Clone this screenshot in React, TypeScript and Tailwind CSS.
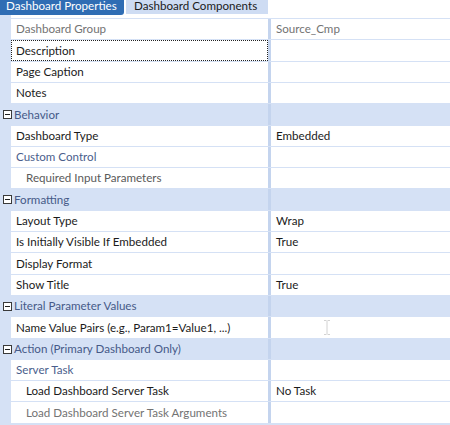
import React from 'react';

type Tone = 'normal' | 'muted' | 'sub' | 'dim';

interface GridRow {
  name: string;
  cat?: boolean;
  value?: string;
  tone?: Tone;
  indent?: boolean;
  focus?: boolean;
  tall?: boolean;
}

const rows: GridRow[] = [
  { name: 'Dashboard Group', value: 'Source_Cmp', tone: 'muted' },
  { name: 'Description', focus: true, tall: true },
  { name: 'Page Caption' },
  { name: 'Notes' },
  { name: 'Behavior', cat: true, tall: true },
  { name: 'Dashboard Type', value: 'Embedded' },
  { name: 'Custom Control', tone: 'sub' },
  { name: 'Required Input Parameters', indent: true, tone: 'dim' },
  { name: 'Formatting', cat: true, tall: true },
  { name: 'Layout Type', value: 'Wrap' },
  { name: 'Is Initially Visible If Embedded', value: 'True' },
  { name: 'Display Format', tall: true },
  { name: 'Show Title', value: 'True' },
  { name: 'Literal Parameter Values', cat: true },
  { name: 'Name Value Pairs (e.g., Param1=Value1, ...)', tall: true },
  { name: 'Action (Primary Dashboard Only)', cat: true },
  { name: 'Server Task', tone: 'sub' },
  { name: 'Load Dashboard Server Task', indent: true, value: 'No Task' },
  { name: 'Load Dashboard Server Task Arguments', indent: true, tone: 'muted', tall: true },
];

const toneClass: Record<Tone, string> = {
  normal: 'text-[#1b1b1b]',
  muted: 'text-[#737373]',
  sub: 'text-[#4a5e8c]',
  dim: 'text-[#5a5a5a]',
};

const MinusBox = () => (
  <svg width="9" height="9" viewBox="0 0 9 9" className="shrink-0">
    <rect x="0.5" y="0.5" width="8" height="8" fill="#ffffff" stroke="#3a3a3a" />
    <rect x="2" y="4" width="5" height="1" fill="#1f1f1f" />
  </svg>
);

const CategoryRow = ({ row }: { row: GridRow }) => (
  <div className={`flex ${row.tall ? 'h-[21px]' : 'h-[20px]'}`}>
    <div className="flex w-[268px] items-center whitespace-nowrap bg-[#d5e1f5] pl-[3px]">
      <MinusBox />
      <span className="ml-[2px] text-[#465a88]">{row.name}</span>
    </div>
    <div className="w-[3px] bg-[#c4d4ee]" />
    <div className="flex-1 bg-[#d5e1f5]" />
  </div>
);

const PropRow = ({ row }: { row: GridRow }) => (
  <div className={`flex ${row.tall ? 'h-[21px]' : 'h-[20px]'}`}>
    <div className="w-[11px]" />
    <div
      className={`flex w-[257px] items-center overflow-hidden whitespace-nowrap bg-white ${
        row.indent ? 'pl-[15px]' : 'pl-[5px]'
      } ${row.focus ? 'outline-1 -outline-offset-1 outline-dotted outline-[#222]' : ''} ${toneClass[row.tone ?? 'normal']}`}
    >
      {row.name}
    </div>
    <div className="w-[3px] bg-[#c4d4ee]" />
    <div
      className={`flex flex-1 items-center bg-white pl-[5px] ${
        row.tone === 'muted' ? 'text-[#737373]' : 'text-[#1b1b1b]'
      }`}
    >
      {row.value}
    </div>
  </div>
);

export default function App() {
  return (
    <div
      className="relative h-[425px] w-[450px] overflow-hidden bg-white text-[11.6px]"
      style={{ fontFamily: 'Lato, "Noto Sans", sans-serif' }}
    >
      {/* tab strip */}
      <div className="flex h-[15px] items-start whitespace-nowrap bg-white leading-[11px]">
        <div className="h-[15px] w-[124px] overflow-hidden rounded-br-[3px] bg-[#2f6db4] pl-[6px] text-white">
          Dashboard Properties
        </div>
        <div className="ml-[2px] h-[14px] w-[142px] overflow-hidden bg-[#cedcf3] pl-[8px] text-[#1b1b1b]">
          Dashboard Components
        </div>
      </div>

      {/* property grid */}
      <div className="flex flex-col gap-px bg-[#d5e1f5] pb-[2px]">
        <div className="flex h-[3px]">
          <div className="w-[11px]" />
          <div className="flex-1 bg-white" />
        </div>
        {rows.map((row) =>
          row.cat ? <CategoryRow key={row.name} row={row} /> : <PropRow key={row.name} row={row} />
        )}
      </div>

      {/* text cursor over the value column */}
      <svg
        className="pointer-events-none absolute left-[323px] top-[320px]"
        width="8"
        height="15"
        viewBox="0 0 8 15"
      >
        <path d="M1 0.5h2.5M4.5 0.5h2.5M4 1v13M1 14.5h2.5M4.5 14.5h2.5" stroke="#d2d2d2" fill="none" />
      </svg>
    </div>
  );
}
